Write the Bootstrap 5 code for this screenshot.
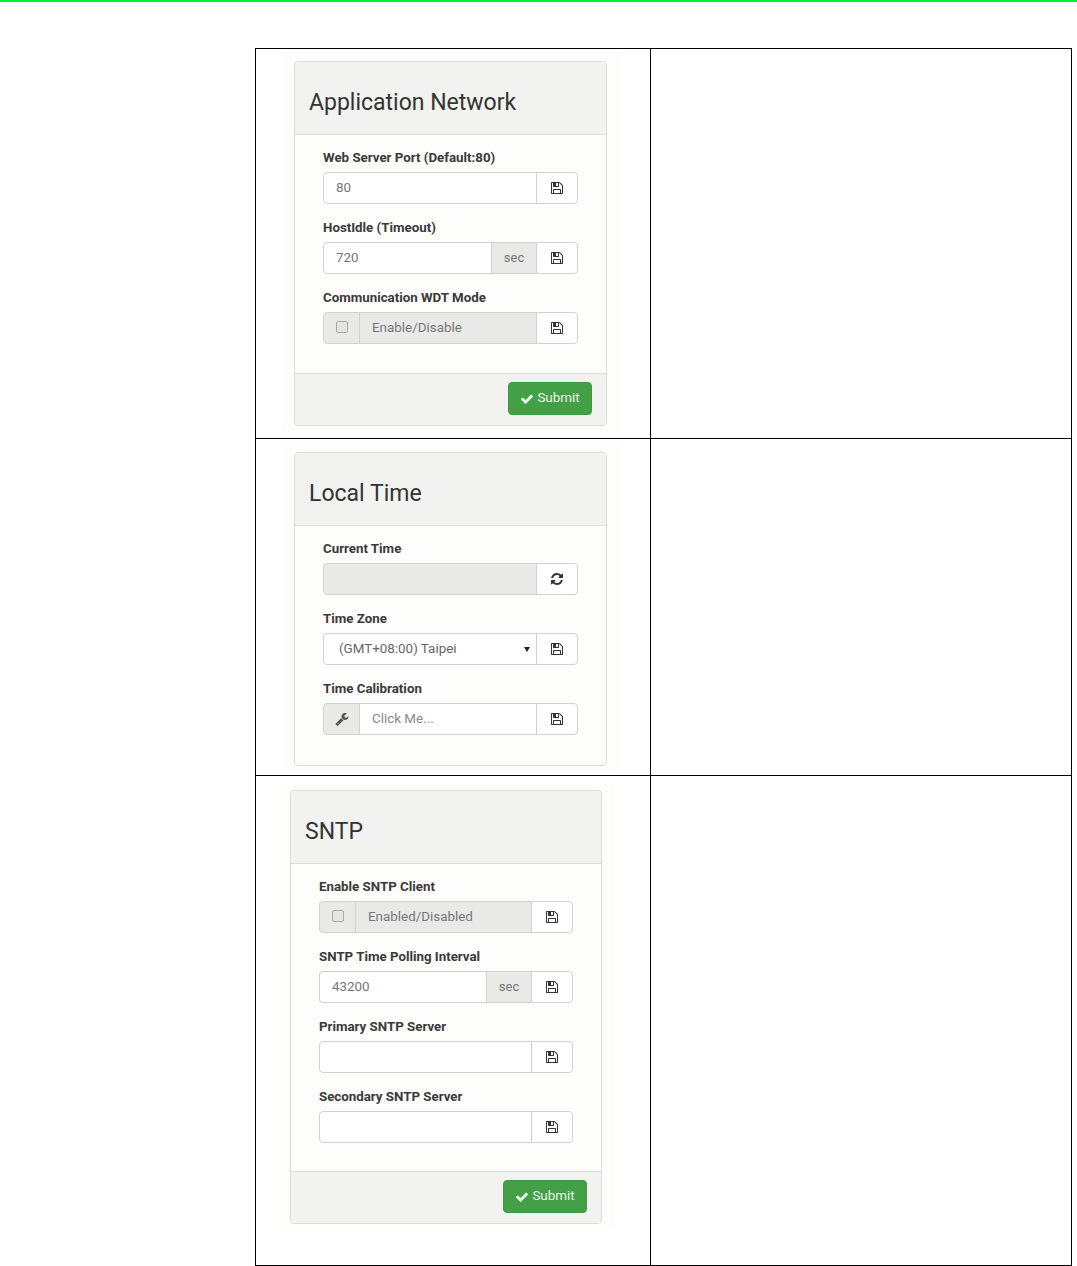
<!DOCTYPE html>
<html lang="en">
<head>
    <meta charset="UTF-8">
    <title>Network settings</title>
    <link href="https://cdn.jsdelivr.net/npm/bootstrap@5.3.0/dist/css/bootstrap.min.css" rel="stylesheet">
    <style>
        body { background: #fff; font-family: Roboto, "Liberation Sans", sans-serif; color: #333; }
        .top-line { height: 2px; background: #00f030; }
        .sheet { margin: 46px 0 0 255px; width: 817px; table-layout: fixed; border-color: #000; }
        .sheet td { padding: 0; border-color: #000; background: #fff; }
        .col-left { width: 395px; }

        .shot { background: #fdfdfc; width: 337px; }
        .shot-a { margin: 2px 0 7px 27px; padding: 10px 0 5px 11px; }
        .shot-b { margin: 6px 0 4px 27px; padding: 7px 0 5px 11px; }
        .shot-c { margin: 6px 0 36px 22px; padding: 8px 0 5px 12px; }

        .panel-box { width: 313px; border: 1px solid #dcdcdc; border-radius: 4px; background: #fdfdfc; }
        .shot-c .panel-box { width: 312px; }
        .panel-box .card-header { height: 73px; padding: 0 14px; display: flex; align-items: center; background: #f2f2f1; border-bottom: 1px solid #dcdcdc; border-radius: 3px 3px 0 0; }
        .panel-box .card-title { margin: 8px 0 0; font-size: 23px; font-weight: 400; color: #333; line-height: 1; }
        .panel-box .card-body { padding: 13px 28px 15px; }
        .shot-b .card-body { padding-bottom: 16px; }
        .shot-c .card-body { padding-bottom: 14px; }
        .panel-box .card-footer { height: 52px; padding: 8px 14px; background: #f2f2f1; border-top: 1px solid #dcdcdc; border-radius: 0 0 3px 3px; }

        .field { margin-bottom: 14px; }
        .field label { display: block; height: 18px; margin-bottom: 6px; font-size: 13.3px; line-height: 20px; font-weight: 700; color: #3a3a3a; }
        .field .input-group { height: 32px; width: 255px; flex-wrap: nowrap; }
        .shot-c .field .input-group { width: 254px; }
        .field .form-control, .field .form-select, .field .input-group-text, .field .btn { font-size: 13.4px; line-height: 20px; border-color: #d2d2d2; border-radius: 4px; }
        .field .form-control { padding: 5px 12px; color: #777; background-color: #fff; min-width: 0; }
        .field .form-control::placeholder { color: #888; }
        .field .form-control[disabled] { background-color: #e9e9e8; color: #777; opacity: 1; }
        .field .form-select { padding: 5px 12px 5px 15px; color: #666; background-color: #fff; background-position: right 4px center; background-size: 10px 10px; background-image: url("data:image/svg+xml,%3csvg xmlns='http://www.w3.org/2000/svg' viewBox='0 0 10 10'%3e%3cpath fill='%23222' d='M2 3h6L5 8z'/%3e%3c/svg%3e"); }
        .field .input-group-text { padding: 0; justify-content: center; background: #e9e9e8; color: #777; }
        .addon-sec { width: 46px; font-size: 13px !important; }
        .addon-lead { width: 37px; flex: none; }
        .addon-lead .form-check-input { width: 12px; height: 12px; margin: 0 0 3px; background-color: #e4e4e3; border-color: #aaa; border-radius: 2px; }
        .field .save-btn { width: 42px; flex: none; padding: 0; display: flex; align-items: center; justify-content: center; background: #fff; color: #333; border: 1px solid #d2d2d2; }
        .ico { width: 14px; height: 14px; fill: currentColor; display: block; }
        .addon-lead .ico { color: #555; }

        .btn-send { width: 84px; height: 33px; padding: 0; display: flex; align-items: center; justify-content: center; gap: 3px; font-size: 13.4px; background: #43a047; border: 1px solid #3f9a43; border-radius: 4px; color: #e8f3e8; }
    </style>
</head>
<body>
<svg width="0" height="0" class="d-block">
    <symbol id="i-save" viewBox="0 0 1792 1792"><path d="M512 1536h768v-384h-768v384zm896 0h128v-896q0-14-10-38.500t-20-34.500l-281-281q-10-10-34-20t-39-10v416q0 40-28 68t-68 28h-576q-40 0-68-28t-28-68v-416h-128v1280h128v-416q0-40 28-68t68-28h832q40 0 68 28t28 68v416zm-384-928v-320q0-13-9.500-22.500t-22.500-9.500h-192q-13 0-22.500 9.500t-9.500 22.500v320q0 13 9.500 22.500t22.500 9.500h192q13 0 22.500-9.500t9.500-22.500zm640 32v928q0 40-28 68t-68 28h-1344q-40 0-68-28t-28-68v-1344q0-40 28-68t68-28h928q40 0 88 20t76 48l280 280q28 28 48 76t20 88z"/></symbol>
    <symbol id="i-refresh" viewBox="0 0 1792 1792"><path d="M1639 1056q0 5-1 7-64 268-268 434.500t-478 166.500q-146 0-282.500-55t-243.500-157l-129 129q-19 19-45 19t-45-19-19-45v-448q0-26 19-45t45-19h448q26 0 45 19t19 45-19 45l-137 137q71 66 161 102t187 36q134 0 250-65t186-179q11-17 53-117 8-23 30-23h192q13 0 22.500 9.500t9.500 22.500zm25-800v448q0 26-19 45t-45 19h-448q-26 0-45-19t-19-45 19-45l138-138q-148-137-349-137-134 0-250 65t-186 179q-11 17-53 117-8 23-30 23h-199q-13 0-22.500-9.500t-9.500-22.500v-7q65-268 270-434.500t480-166.500q146 0 284 55.500t245 156.500l130-129q19-19 45-19t45 19 19 45z"/></symbol>
    <symbol id="i-wrench" viewBox="0 0 1792 1792"><path d="M448 1472q0-26-19-45t-45-19-45 19-19 45 19 45 45 19 45-19 19-45zm644-420l-682 682q-37 37-90 37-52 0-91-37l-106-108q-38-36-38-90 0-53 38-91l681-681q39 98 114.500 173.500t173.500 114.500zm634-435q0 39-23 106-47 134-164.500 217.500t-258.500 83.500q-185 0-316.500-131.500t-131.500-316.500 131.500-316.500 316.500-131.500q58 0 121.500 16.500t107.500 46.500q16 11 16 28t-16 28l-293 169v224l193 107q5-3 79-48.500t135.500-81 70.500-35.500q15 0 23.500 10t8.500 25z"/></symbol>
    <symbol id="i-check" viewBox="0 0 1792 1792"><path d="M1671 566q0 40-28 68l-724 724-136 136q-28 28-68 28t-68-28l-136-136-362-362q-28-28-28-68t28-68l136-136q28-28 68-28t68 28l294 295 656-657q28-28 68-28t68 28l136 136q28 28 28 68z"/></symbol>
</svg>
<div class="top-line"></div>

<table class="table table-bordered sheet mb-0">
    <colgroup><col class="col-left"><col></colgroup>
    <tbody>
    <tr>
        <td>
            <div class="shot shot-a">
                <div class="card panel-box">
                    <div class="card-header"><h3 class="card-title">Application Network</h3></div>
                    <div class="card-body">
                        <div class="field">
                            <label>Web Server Port (Default:80)</label>
                            <div class="input-group">
                                <input class="form-control" type="text" value="80">
                                <button class="btn save-btn" type="button"><svg class="ico"><use href="#i-save"/></svg></button>
                            </div>
                        </div>
                        <div class="field">
                            <label>HostIdle (Timeout)</label>
                            <div class="input-group">
                                <input class="form-control" type="text" value="720">
                                <span class="input-group-text addon-sec">sec</span>
                                <button class="btn save-btn" type="button"><svg class="ico"><use href="#i-save"/></svg></button>
                            </div>
                        </div>
                        <div class="field">
                            <label>Communication WDT Mode</label>
                            <div class="input-group">
                                <span class="input-group-text addon-lead"><input class="form-check-input" type="checkbox"></span>
                                <input class="form-control" type="text" value="Enable/Disable" disabled>
                                <button class="btn save-btn" type="button"><svg class="ico"><use href="#i-save"/></svg></button>
                            </div>
                        </div>
                    </div>
                    <div class="card-footer d-flex justify-content-end">
                        <button class="btn btn-send" type="button"><svg class="ico"><use href="#i-check"/></svg>Submit</button>
                    </div>
                </div>
            </div>
        </td>
        <td></td>
    </tr>
    <tr>
        <td>
            <div class="shot shot-b">
                <div class="card panel-box">
                    <div class="card-header"><h3 class="card-title">Local Time</h3></div>
                    <div class="card-body">
                        <div class="field">
                            <label>Current Time</label>
                            <div class="input-group">
                                <input class="form-control" type="text" disabled>
                                <button class="btn save-btn" type="button"><svg class="ico"><use href="#i-refresh"/></svg></button>
                            </div>
                        </div>
                        <div class="field">
                            <label>Time Zone</label>
                            <div class="input-group">
                                <select class="form-select"><option>(GMT+08:00) Taipei</option></select>
                                <button class="btn save-btn" type="button"><svg class="ico"><use href="#i-save"/></svg></button>
                            </div>
                        </div>
                        <div class="field">
                            <label>Time Calibration</label>
                            <div class="input-group">
                                <span class="input-group-text addon-lead"><svg class="ico"><use href="#i-wrench"/></svg></span>
                                <input class="form-control" type="text" placeholder="Click Me...">
                                <button class="btn save-btn" type="button"><svg class="ico"><use href="#i-save"/></svg></button>
                            </div>
                        </div>
                    </div>
                </div>
            </div>
        </td>
        <td></td>
    </tr>
    <tr>
        <td>
            <div class="shot shot-c">
                <div class="card panel-box">
                    <div class="card-header"><h3 class="card-title">SNTP</h3></div>
                    <div class="card-body">
                        <div class="field">
                            <label>Enable SNTP Client</label>
                            <div class="input-group">
                                <span class="input-group-text addon-lead"><input class="form-check-input" type="checkbox"></span>
                                <input class="form-control" type="text" value="Enabled/Disabled" disabled>
                                <button class="btn save-btn" type="button"><svg class="ico"><use href="#i-save"/></svg></button>
                            </div>
                        </div>
                        <div class="field">
                            <label>SNTP Time Polling Interval</label>
                            <div class="input-group">
                                <input class="form-control" type="text" value="43200">
                                <span class="input-group-text addon-sec">sec</span>
                                <button class="btn save-btn" type="button"><svg class="ico"><use href="#i-save"/></svg></button>
                            </div>
                        </div>
                        <div class="field">
                            <label>Primary SNTP Server</label>
                            <div class="input-group">
                                <input class="form-control" type="text">
                                <button class="btn save-btn" type="button"><svg class="ico"><use href="#i-save"/></svg></button>
                            </div>
                        </div>
                        <div class="field">
                            <label>Secondary SNTP Server</label>
                            <div class="input-group">
                                <input class="form-control" type="text">
                                <button class="btn save-btn" type="button"><svg class="ico"><use href="#i-save"/></svg></button>
                            </div>
                        </div>
                    </div>
                    <div class="card-footer d-flex justify-content-end">
                        <button class="btn btn-send" type="button"><svg class="ico"><use href="#i-check"/></svg>Submit</button>
                    </div>
                </div>
            </div>
        </td>
        <td></td>
    </tr>
    </tbody>
</table>
</body>
</html>
